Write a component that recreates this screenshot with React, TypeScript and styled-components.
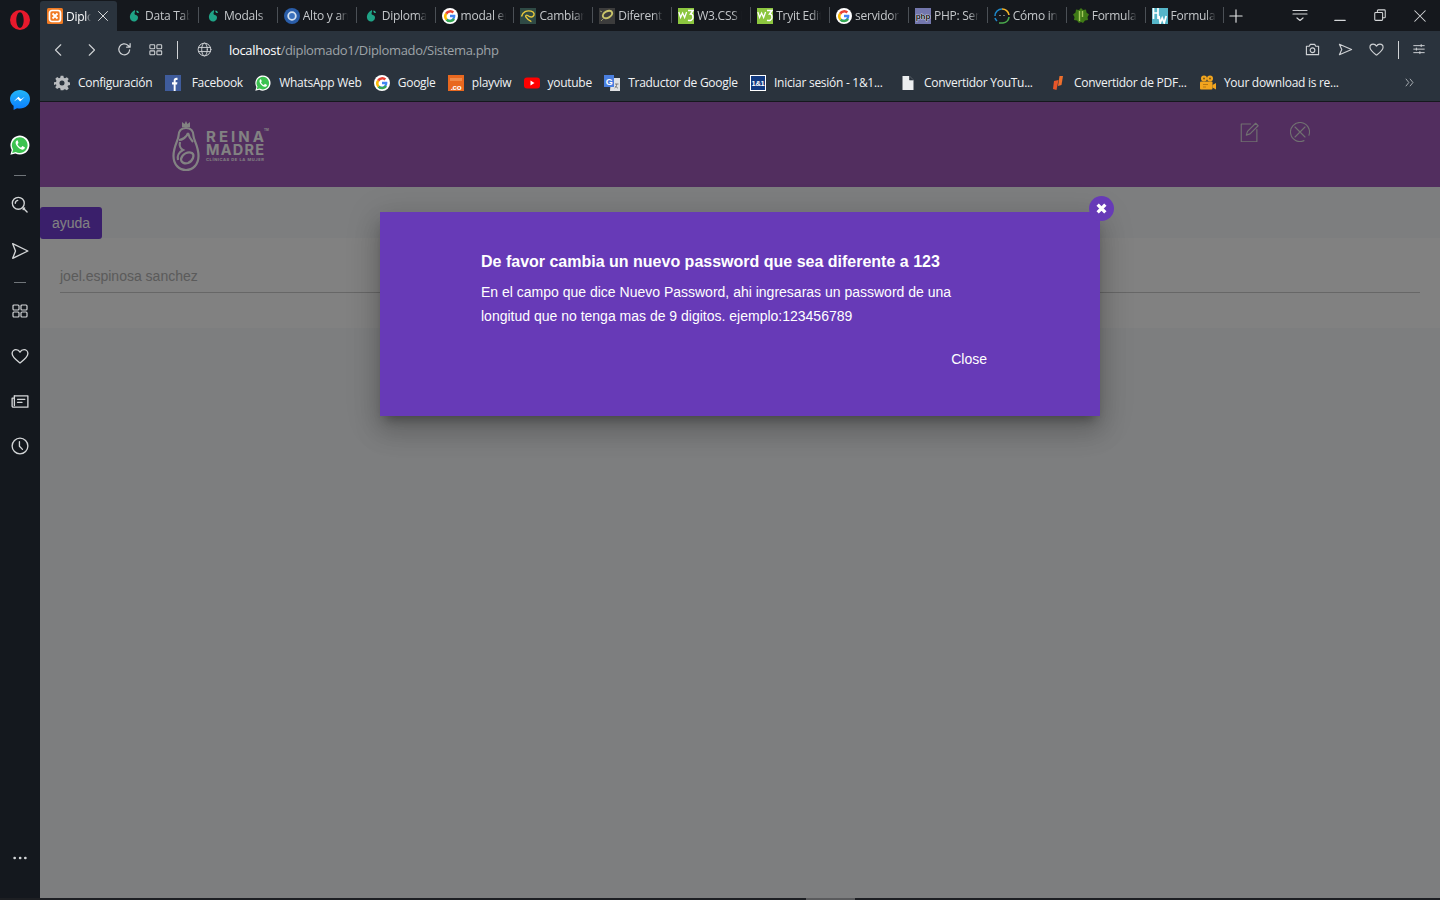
import React from "react";
import styled, { createGlobalStyle } from "styled-components";

const Global = createGlobalStyle`
  html, body { margin: 0; padding: 0; height: 100%; overflow: hidden; background: #14181e; }
  #root { height: 100%; }
  * { box-sizing: border-box; }
`;

const Shell = styled.div`
  width: 1440px; height: 900px; display: flex; flex-direction: column; overflow: hidden;
  font-family: "Open Sans", "Noto Sans", sans-serif;
`;
const Row = styled.div`flex: 1; display: flex; min-height: 0;`;
const BottomStrip = styled.div`height: 2px; background: #1d1f23; flex: none;`;
const BottomThumb = styled.div`height: 2px; width: 49px; margin-left: 806px; background: #5a5b5d;`;

const Sidebar = styled.nav`width: 40px; flex: none; background: #14181e; display: flex; flex-direction: column; align-items: center;`;
const SideSlot = styled.div<{ $h: number; $mt?: number; $mb?: number }>`
  height: ${p => p.$h}px; margin-top: ${p => p.$mt ?? 0}px; margin-bottom: ${p => p.$mb ?? 0}px;
  width: 40px; flex: none; display: flex; align-items: center; justify-content: center; color: #d3d5d7;
`;
const SideRule = styled.div`width: 12px; height: 1px; background: #70757a;`;
const Grow = styled.div`flex: 1;`;

const Main = styled.div`flex: 1; min-width: 0; display: flex; flex-direction: column;`;
const TabStrip = styled.div`height: 31px; flex: none; background: #15181d; display: flex; align-items: flex-end; position: relative;`;
const ActiveTab = styled.div`
  width: 77px; height: 30px; margin-right: 3px; flex: none; background: #2a333d; border-radius: 3px 3px 0 0;
  display: flex; align-items: center; padding-left: 7px; color: #fff; font-size: 12px;
`;
const Tab = styled.div`
  flex: 0 0 78.9px; height: 31px; display: flex; align-items: center; padding-left: 6px; position: relative;
  color: #c4c7ca; font-size: 12px;
  &::after { content: ""; position: absolute; right: 0; top: 7px; height: 16px; width: 1px; background: #4b5056; }
`;
const TabIcon = styled.span`width: 16px; height: 16px; flex: none; display: flex; margin-right: 3px;`;
const TabLabel = styled.span<{ $w: number }>`
  width: ${p => p.$w}px; overflow: hidden; white-space: nowrap; flex: none; letter-spacing: -0.25px;
  -webkit-mask-image: linear-gradient(to right, #000 78%, transparent 100%);
  mask-image: linear-gradient(to right, #000 78%, transparent 100%);
`;
const TabClose = styled.span`display: flex; margin-left: 6px; color: #e8e9ea;`;
const NewTab = styled.div`width: 24px; height: 31px; display: flex; align-items: center; justify-content: center; color: #e4e5e6; flex: none;`;
const WindowButtons = styled.div`margin-left: auto; display: flex; height: 31px; color: #d4d6d8;`;
const WinButton = styled.div`width: 40px; height: 31px; display: flex; align-items: center; justify-content: center;`;

const Toolbar = styled.header`height: 71px; flex: none; background: #2a333d; border-bottom: 1px solid #15181d; display: flex; flex-direction: column;`;
const AddressRow = styled.div`height: 37px; flex: none; display: flex; align-items: center; padding-left: 9px; padding-right: 9px; color: #cfd2d5;`;
const NavButton = styled.div<{ $w: number }>`width: ${p => p.$w}px; height: 37px; flex: none; display: flex; align-items: center; justify-content: center;`;
const ToolRule = styled.div<{ $ml: number; $mr: number }>`width: 1px; height: 18px; background: #d0d3d6; margin: 0 ${p => p.$mr}px 0 ${p => p.$ml}px; flex: none;`;
const Url = styled.div`font-size: 13px; color: #9ea3a8; white-space: nowrap; margin-left: 5px; letter-spacing: -0.33px; flex: 1;`;
const UrlHost = styled.span`color: #fff;`;

const Bookmarks = styled.div`height: 29px; flex: none; display: flex; align-items: center; padding-left: 14px; gap: 12.3px; color: #f0f2f4; font-size: 12px; letter-spacing: -0.28px;`;
const Bookmark = styled.div<{ $w?: number; $gap?: number }>`display: flex; align-items: center; gap: ${p => p.$gap ?? 8}px; white-space: nowrap; flex: none; ${p => p.$w ? `width: ${p.$w}px;` : ""}`;
const BookIcon = styled.span`width: 16px; height: 16px; display: flex; flex: none;`;
const BookMore = styled.div`margin-left: auto; width: 61px; display: flex; justify-content: center; color: #bfc3c7; flex: none;`;

const Page = styled.main`flex: 1; position: relative; background: #f5f7f9; min-height: 0; font-family: "Liberation Sans", Arial, sans-serif;`;
const SiteHeader = styled.div`height: 85px; background: #a15abb; display: flex; justify-content: space-between; align-items: flex-start; padding: 18px 130px 0 132px;`;
const Logo = styled.div`display: flex; color: #fff;`;
const HeaderActions = styled.div`display: flex; gap: 30px; margin-top: 2px; color: #dcdcdc;`;
const HelpButton = styled.button`
  display: block; height: 32px; margin: 20px 0 0; padding: 0 12px; border: 0; border-radius: 3px; background: #723dd2; color: #fff;
  font: 14px/32px "Liberation Sans", Arial, sans-serif; position: relative;
`;
const Card = styled.section`height: 90px; margin-top: -1px; background: #fdfdfd; padding: 26px 20px 0;`;
const Field = styled.div`height: 29px; border-bottom: 1px solid #cbcbcb; font-size: 14px; line-height: 24px; color: #b2b2b2;`;

const Backdrop = styled.div`position: absolute; inset: 0; background: rgba(0,0,0,.49);`;
const Modal = styled.div`
  position: absolute; top: 110px; left: 340px; width: 720px; height: 204px; background: #673ab7; color: #fff; padding: 40px 101px 0;
  box-shadow: 0 16px 24px 2px rgba(0,0,0,.14), 0 6px 30px 5px rgba(0,0,0,.12), 0 8px 10px -5px rgba(0,0,0,.3);
`;
const ModalClose = styled.div`
  position: absolute; right: -14px; top: -16px; width: 25px; height: 25px; border-radius: 50%; background: #673ab7;
  display: flex; align-items: center; justify-content: center;
`;
const ModalTitle = styled.h4`margin: 0 0 8px; font-size: 16px; line-height: 20px; font-weight: 700;`;
const ModalText = styled.p`margin: 0; font-size: 14px; line-height: 24px;`;
const ModalFooter = styled.div`display: flex; justify-content: flex-end; margin-top: 13px;`;
const CloseButton = styled.button`height: 36px; padding: 0 12px; border: 0; background: transparent; color: #fff; font: 14px/36px "Liberation Sans", Arial, sans-serif;`;

type IP = { s?: number; w?: number; children: React.ReactNode };
const Ic = ({ s = 16, w = 1.2, children }: IP) => (
  <svg width={s} height={s} viewBox="0 0 16 16" fill="none" stroke="currentColor" strokeWidth={w} strokeLinecap="round" strokeLinejoin="round">{children}</svg>
);

const Fav = ({ children }: { children: React.ReactNode }) => <svg width="16" height="16" viewBox="0 0 16 16">{children}</svg>;
const G = () => (
  <Fav>
    <circle cx="8" cy="8" r="8" fill="#fff" />
    <path d="M13.200 6.700H8v2.500h3a3.300 3.300 0 0 1-5.400 1.500L3.700 12.400A6 6 0 0 0 13.400 7.800c0-.4-.1-.8-.2-1.100z" fill="#4285f4" />
    <path d="M3.700 12.400a6 6 0 0 1-.5-7.600l2.100 1.600a3.300 3.300 0 0 0 .3 4.300z" fill="#fbbc05" />
    <path d="M3.200 4.800A6 6 0 0 1 12.200 3.600L10.400 5.400a3.300 3.300 0 0 0-5.100 1z" fill="#ea4335" />
    <path d="M3.700 12.400l1.900-1.700a3.300 3.300 0 0 0 5.400-.4l2.100 1.400A6 6 0 0 1 3.700 12.400z" fill="#34a853" />
  </Fav>
);
const Leaf = () => (
  <Fav>
    <path d="M9 2C5.500 3.500 3.500 7 4 10c.5 3 3.500 4.500 6 3 2.500-1.500 2.500-4.500 1-5.500-1.500-1-2.500-.5-2.500-2C8.500 4.500 9.500 4 9 2z" fill="#1fa386" />
    <path d="M10.500 2.500C10 4 11 5.300 12.800 5c0-1.300-1-2.500-2.300-2.500z" fill="#2dbd9b" />
  </Fav>
);
const Xampp = () => (
  <Fav>
    <rect width="16" height="16" rx="1.500" fill="#f07a22" />
    <rect x="2.500" y="2.500" width="11" height="11" rx="2.500" fill="none" stroke="#fff" strokeWidth="1.700" />
    <path d="M5.500 5.500l5 5M10.500 5.500l-5 5" stroke="#fff" strokeWidth="1.800" />
  </Fav>
);
const Alto = () => (
  <Fav>
    <circle cx="8" cy="8" r="8" fill="#2a5da8" />
    <circle cx="8" cy="8" r="3.800" fill="#3b71bd" stroke="#d5e2f0" strokeWidth="1.800" />
  </Fav>
);
const Cambiar = () => (
  <Fav>
    <rect width="16" height="16" fill="#2f4a45" />
    <path d="M1.500 8.500C2.500 4 7 2 11 3.200c3.400 1 4 3.600 2 5.200-2 1.600-4 .2-5.400-.9-1.300-1-2.600.3-1.600 1.700 1 1.600 3.400 3.800 5.400 4.400" fill="none" stroke="#e9c93c" strokeWidth="1.400" />
  </Fav>
);
const Diferente = () => (
  <Fav>
    <rect width="16" height="16" fill="#3c3c3c" />
    <ellipse cx="8.500" cy="6.500" rx="5" ry="3.200" transform="rotate(-28 8.500 6.500)" fill="none" stroke="#c9c46a" strokeWidth="2" />
    <path d="M1 3l2 .8M2 13l3-3" stroke="#8f8f6a" strokeWidth="1" />
  </Fav>
);
const W3 = () => (
  <Fav>
    <rect width="16" height="16" fill="#8cc63f" />
    <path d="M.8 4l1.800 5.500 2-4.500 2 4.500L8.600 4" fill="none" stroke="#fff" strokeWidth="1.300" />
    <path d="M10 2.500h5l-2.500 3.500c1.500 0 2.500 1.200 2.500 3.200 0 2.600-2.500 4-5 3" fill="none" stroke="#fff" strokeWidth="1.500" />
  </Fav>
);
const Php = () => (
  <Fav>
    <rect width="16" height="16" fill="#7377ad" />
    <text x="8" y="11" textAnchor="middle" fontFamily="Liberation Sans, sans-serif" fontSize="8" fontWeight="700" fill="#111" stroke="#fff" strokeWidth=".7" paintOrder="stroke">php</text>
  </Fav>
);
const Como = () => (
  <Fav>
    <path d="M1 8a7 7 0 0 1 7-7" fill="none" stroke="#1e88c9" strokeWidth="1.600" />
    <path d="M8 1a7 7 0 0 1 7 6" fill="none" stroke="#f4b32b" strokeWidth="1.600" />
    <path d="M15 9a7 7 0 0 1-6 6H5" fill="none" stroke="#49a84c" strokeWidth="1.600" />
    <path d="M3 13a7 7 0 0 1-2-3" fill="none" stroke="#1e88c9" strokeWidth="1.600" />
    <path d="M5.500 7.500h1M9.500 7.500h1" stroke="#ddd" strokeWidth="1" />
  </Fav>
);
const Formula = () => (
  <Fav>
    <path d="M8 0l2 2 3-.5.5 3L16 6.500 14.500 9l.5 3-3 .5L10 15l-2-1-2 1-2-2.500-3-.5.5-3L0 6.500 2.500 4.500 3 1.500l3 .5z" fill="#3f7a16" />
    <path d="M6.500 3v10M9.500 3v6" stroke="#a5c85c" strokeWidth="1.400" />
  </Fav>
);
const Hw = () => (
  <Fav>
    <rect width="16" height="16" fill="#55b6c9" />
    <path d="M1.500 0v11M6 0v11M1.500 5h4.500M7 8l1.200 7 2-5 2 5 2-7" fill="none" stroke="#fff" strokeWidth="1.700" />
  </Fav>
);
const Facebook = () => (
  <Fav>
    <rect width="16" height="16" fill="#3f5c9c" />
    <path d="M8.700 16V9.500H7V7.200h1.700V5.500c0-1.800 1.100-2.700 2.600-2.700h1.200V5h-1c-.7 0-.9.4-.9.9v1.300h1.800l-.3 2.300h-1.500V16z" fill="#fff" />
  </Fav>
);
const Whatsapp = ({ s = 16 }: { s?: number }) => (
  <svg width={s} height={s} viewBox="0 0 16 16">
    <path d="M.3 15.800l1.100-3.900A7.600 7.600 0 1 1 4.300 14.700z" fill="#fff" />
    <path d="M1.700 14.300l.8-2.700a6.300 6.300 0 1 1 2.100 2z" fill="#3cc250" />
    <path d="M5.700 4.200c-.6.3-1.300 1.100-1.200 2.200.2 2 2.800 5 5.200 5.300 1.200.1 2-.6 2.200-1.300.1-.4 0-.6-.2-.7L10.300 8.900c-.3-.1-.5 0-.7.3l-.5.6c-.2.2-.4.2-.6.1-1-.4-1.900-1.300-2.400-2.300-.1-.2-.1-.4.1-.6l.4-.5c.2-.2.2-.4.1-.6L6.100 4.400c-.1-.2-.2-.3-.4-.2z" fill="#fff" />
  </svg>
);
const Messenger = () => (
  <svg width="20" height="20" viewBox="0 0 20 20">
    <defs><linearGradient id="ms" x1="0" y1="1" x2="0" y2="0"><stop offset="0" stopColor="#0a7cff" /><stop offset="1" stopColor="#22b5f7" /></linearGradient></defs>
    <path d="M10 0C4.500 0 0 4 0 9c0 2.800 1.400 5.200 3.600 6.800V20l3.400-1.800c1 .2 2 .3 3 .3 5.500 0 10-4.100 10-9.500S15.500 0 10 0z" fill="url(#ms)" />
    <path d="M3.800 11.500l4.600-4.800 2.600 2.500 3.800-2.500-4.600 4.900-2.500-2.600z" fill="#fff" />
  </svg>
);
const Opera = () => (
  <svg width="20" height="20" viewBox="0 0 20 20">
    <path fillRule="evenodd" d="M10 0a10 10 0 1 0 0 20 10 10 0 0 0 0-20zm0 2.200c2.100 0 3.700 3.500 3.700 7.800s-1.600 7.800-3.700 7.800S6.300 14.300 6.300 10 7.900 2.200 10 2.200z" fill="#e8192c" />
  </svg>
);
const Translate = () => (
  <Fav>
    <path d="M7 3h9v13H6z" fill="#dfe1e4" />
    <path d="M0 0h10v12H0z" fill="#4a7fe0" />
    <text x="5" y="9.500" textAnchor="middle" fontFamily="Liberation Sans, sans-serif" fontSize="9" fontWeight="700" fill="#fff">G</text>
    <path d="M11 9h3.500M12.700 9c0 2-1 3.500-2 4M11.500 11c.5 1 1.500 2 2.500 2" stroke="#666" strokeWidth=".8" fill="none" />
  </Fav>
);
const OneAndOne = () => (
  <Fav>
    <rect width="16" height="16" fill="#fff" />
    <rect x="1" y="1" width="14" height="14" fill="#123a80" />
    <text x="8" y="11" textAnchor="middle" fontFamily="Liberation Sans, sans-serif" fontSize="7.500" fontWeight="700" fill="#fff">1&amp;1</text>
  </Fav>
);
const Doc = () => (
  <Fav><path d="M2.500 1h7l4 4v10h-11z" fill="#eceef0" /><path d="M9.500 1v4h4" fill="#2a333d" stroke="#2a333d" strokeWidth=".6" /></Fav>
);
const Pdf = () => (
  <Fav>
    <path d="M4 6l4.500-1L6.500 15 3 14z" fill="#e8562a" />
    <path d="M9.500 1L13 1l-1.500 9-3.500 1z" fill="#ef6f2c" />
  </Fav>
);
const Film = () => (
  <Fav>
    <circle cx="4" cy="3.500" r="3" fill="#f2a51e" /><circle cx="10" cy="3.500" r="3" fill="#f2a51e" />
    <circle cx="4" cy="3.500" r="1" fill="#7a5a1a" /><circle cx="10" cy="3.500" r="1" fill="#7a5a1a" />
    <rect x="0" y="6.500" width="12.500" height="8" rx="1" fill="#f2a51e" /><path d="M12.500 10l3.500-2v6.500l-3.500-2z" fill="#f2a51e" />
    <path d="M3 9.500h5M3 12h3" stroke="#b97a12" strokeWidth="1" />
  </Fav>
);
const Co = () => (
  <Fav>
    <rect width="16" height="16" fill="#e8681f" />
    <rect x="2" y="3" width="12" height="3" fill="#f08a48" />
    <text x="8" y="14.500" textAnchor="middle" fontFamily="Liberation Sans, sans-serif" fontSize="8" fontWeight="700" fill="#fff">.co</text>
  </Fav>
);
const Youtube = () => (
  <Fav>
    <rect y="2.500" width="16" height="11" rx="3" fill="#f00" />
    <path d="M6.500 5.500l4 2.500-4 2.500z" fill="#fff" />
  </Fav>
);
const Gear = () => (
  <svg width="16" height="16" viewBox="0 0 24 24">
    <path fillRule="evenodd" fill="#b9bcbf" d="M10 1h4l.7 3.200 1.800.8 2.800-1.800 2.800 2.800L20.300 8.800l.8 1.800 2.900.6v3.800l-3 .6-.7 1.800 1.800 2.800-2.800 2.800-2.800-1.800-1.800.7L14 23h-4l-.7-3-1.800-.7-2.800 1.800-2.800-2.800 1.800-2.800-.8-1.800L0 15v-4l3-.6.7-1.800L2 5.800 4.800 3l2.700 1.800 1.800-.8zM12 8.200a3.800 3.800 0 1 0 0 7.600 3.800 3.800 0 0 0 0-7.600z" />
  </svg>
);

const tabs: [React.ReactNode, string][] = [
  [<Leaf />, "Data Tables"], [<Leaf />, "Modals | M"], [<Alto />, "Alto y ancho"], [<Leaf />, "Diplomado"],
  [<G />, "modal en"], [<Cambiar />, "Cambiar el"], [<Diferente />, "Diferentes"], [<W3 />, "W3.CSS M"],
  [<W3 />, "Tryit Editor"], [<G />, "servidor"], [<Php />, "PHP: Serv"], [<Como />, "Cómo in"],
  [<Formula />, "Formula"], [<Hw />, "Formula"],
];

export default function App() {
  return (
    <Shell>
      <Global />
      <Row>
        <Sidebar>
          <SideSlot $h={40}><Opera /></SideSlot>
          <SideSlot $h={40} $mt={40}><Messenger /></SideSlot>
          <SideSlot $h={50}><Whatsapp s={20} /></SideSlot>
          <SideSlot $h={11}><SideRule /></SideSlot>
          <SideSlot $h={48}>
            <Ic s={18}><circle cx="6.500" cy="6.500" r="5.300" /><path d="M3.800 6.500A2.700 2.700 0 0 1 6 3.900M10.500 10.500l3.800 3.800" /><path d="M10.800 12l1.300-1.300" /></Ic>
          </SideSlot>
          <SideSlot $h={44}>
            <Ic s={18}><path d="M1.500 1.500L15 8 1.500 14.500 4 8z" /></Ic>
          </SideSlot>
          <SideSlot $h={18}><SideRule /></SideSlot>
          <SideSlot $h={40}>
            <Ic><rect x="1" y="2" width="6" height="5" rx="1" /><rect x="9" y="2" width="6" height="5" rx="1" /><rect x="1" y="9" width="6" height="5" rx="1" /><rect x="9" y="9" width="6" height="5" rx="1" /></Ic>
          </SideSlot>
          <SideSlot $h={50}>
            <Ic s={18}><path d="M8 14.200C4.500 11.500 1 9 1 5.800 1 3.600 2.700 2.300 4.400 2.300 5.900 2.300 7.200 3.100 8 4.500c.8-1.400 2.100-2.200 3.600-2.200 1.700 0 3.400 1.300 3.400 3.500 0 3.200-3.500 5.700-7 8.400z" /></Ic>
          </SideSlot>
          <SideSlot $h={40}>
            <Ic s={18}><path d="M3 3.500h12v10H2a1 1 0 0 1-1-1V5.500h2" /><path d="M3 3.500v8.500M5.800 6.500h6.500M5.800 9.200h4" /></Ic>
          </SideSlot>
          <SideSlot $h={50}>
            <Ic s={18}><circle cx="8" cy="8" r="7" /><path d="M7.500 4.200V8.300l2.700 2.700" /></Ic>
          </SideSlot>
          <Grow />
          <SideSlot $h={40} $mb={20}>
            <Ic><path d="M2.500 8h.3M8 8h.3M13.200 8h.3" strokeWidth="2.400" /></Ic>
          </SideSlot>
        </Sidebar>
        <Main>
          <TabStrip>
            <ActiveTab>
              <TabIcon><Xampp /></TabIcon>
              <TabLabel $w={25}>Diplomado</TabLabel>
              <TabClose><Ic s={12}><path d="M2 2l12 12M14 2L2 14" /></Ic></TabClose>
            </ActiveTab>
            {tabs.map(([icon, label], i) => (
              <Tab key={i}>
                <TabIcon>{icon}</TabIcon>
                <TabLabel $w={45}>{label}</TabLabel>
              </Tab>
            ))}
            <NewTab><Ic s={14} w={1.300}><path d="M8 1v14M1 8h14" /></Ic></NewTab>
            <WindowButtons>
              <WinButton><Ic s={16}><path d="M1 2.500h14M1 6h14M5 10l3 2.500 3-2.500" /></Ic></WinButton>
              <WinButton><Ic s={14}><path d="M2 13h12" /></Ic></WinButton>
              <WinButton><Ic s={14}><rect x="2" y="4" width="9" height="9" rx="1" /><path d="M5 4V2a1 1 0 0 1 1-1h7a1 1 0 0 1 1 1v7a1 1 0 0 1-1 1h-2" /></Ic></WinButton>
              <WinButton><Ic s={14}><path d="M2 2l12 12M14 2L2 14" /></Ic></WinButton>
            </WindowButtons>
          </TabStrip>
          <Toolbar>
            <AddressRow>
              <NavButton $w={20}><Ic s={14} w={1.300}><path d="M10 2L4 8l6 6" /></Ic></NavButton>
              <NavButton $w={44}><Ic s={14} w={1.300}><path d="M6 2l6 6-6 6" /></Ic></NavButton>
              <NavButton $w={22}><Ic s={15} w={1.300}><path d="M13.500 8.500A5.800 5.800 0 1 1 11.600 3.500L14 5.500M14 1.800v3.700h-3.700" /></Ic></NavButton>
              <NavButton $w={41}><Ic s={14}><rect x="1" y="2" width="5.500" height="4.500" rx=".8" /><rect x="9" y="2" width="5.500" height="4.500" rx=".8" /><rect x="1" y="9" width="5.500" height="4.500" rx=".8" /><rect x="9" y="9" width="5.500" height="4.500" rx=".8" /></Ic></NavButton>
              <ToolRule $ml={1} $mr={6} />
              <NavButton $w={40}><Ic s={15} w={1}><circle cx="8" cy="8" r="6.800" /><ellipse cx="8" cy="8" rx="3" ry="6.800" /><path d="M1.600 5.800h12.800M1.600 10.200h12.800" /></Ic></NavButton>
              <Url><UrlHost>localhost</UrlHost>/diplomado1/Diplomado/Sistema.php</Url>
              <NavButton $w={32}><Ic s={15}><path d="M1.500 4.500h3l1.200-2h4.600l1.200 2h3v9h-13z" /><circle cx="8" cy="8.800" r="2.500" /></Ic></NavButton>
              <NavButton $w={34}><Ic s={15}><path d="M1.500 2.500L14.500 8 1.500 13.500 4 8z" /></Ic></NavButton>
              <NavButton $w={28}><Ic s={15}><path d="M8 14C4.500 11.300 1 8.800 1 5.600 1 3.400 2.700 2.200 4.400 2.200 5.900 2.200 7.200 3 8 4.400c.8-1.400 2.100-2.200 3.600-2.200 1.700 0 3.400 1.200 3.400 3.400 0 3.200-3.500 5.700-7 8.400z" /></Ic></NavButton>
              <ToolRule $ml={8} $mr={8} />
              <NavButton $w={24}><Ic s={14} w={1.100}><path d="M2 3h12M2 7h12M2 11h12M10.500 1.800v2.400M5 5.800v2.400M9 9.800v2.400" /></Ic></NavButton>
            </AddressRow>
            <Bookmarks>
              <Bookmark><BookIcon><Gear /></BookIcon>Configuración</Bookmark>
              <Bookmark $gap={11}><BookIcon><Facebook /></BookIcon>Facebook</Bookmark>
              <Bookmark><BookIcon><Whatsapp /></BookIcon>WhatsApp Web</Bookmark>
              <Bookmark><BookIcon><G /></BookIcon>Google</Bookmark>
              <Bookmark><BookIcon><Co /></BookIcon>playviw</Bookmark>
              <Bookmark><BookIcon><Youtube /></BookIcon>youtube</Bookmark>
              <Bookmark><BookIcon><Translate /></BookIcon>Traductor de Google</Bookmark>
              <Bookmark $w={137.7}><BookIcon><OneAndOne /></BookIcon>Iniciar sesión - 1&amp;1...</Bookmark>
              <Bookmark $w={137.7}><BookIcon><Doc /></BookIcon>Convertidor YouTu...</Bookmark>
              <Bookmark $w={137.7}><BookIcon><Pdf /></BookIcon>Convertidor de PDF...</Bookmark>
              <Bookmark><BookIcon><Film /></BookIcon>Your download is re...</Bookmark>
              <BookMore><Ic s={11}><path d="M3 3l4 5-4 5M9 3l4 5-4 5" /></Ic></BookMore>
            </Bookmarks>
          </Toolbar>
          <Page>
            <SiteHeader>
              <Logo>
                <svg width="100" height="52" viewBox="0 0 100 52" fill="none" stroke="currentColor" strokeWidth="2.200">
                  <path d="M10 7V2l2.500 2L14 1l1.500 3L18 2v5z" fill="currentColor" stroke="none" />
                  <path d="M14 8c-5 0-7.500 3-7.500 8 0 4-5 10-5 20 0 9 6 14 12.500 14S26.500 45 26.500 36c0-10-5-16-5-20 0-5-2.500-8-7.500-8z" />
                  <path d="M7 20c3 0 8-3 9-7 1 4 3 7 5 9M8 22c-1 4 1 7 3 8-4 2-6 6-5 10" />
                  <path d="M9 39c1-5 7-8 11-6 3 2 1 8-4 10-3 1-7 0-7-4z" />
                  <g fill="currentColor" stroke="none" fontFamily="Inter, Open Sans, sans-serif" fontWeight="700">
                    <text x="34" y="22" fontSize="15" textLength="58" lengthAdjust="spacing">REINA</text>
                    <text x="34" y="34.500" fontSize="14.500" textLength="58" lengthAdjust="spacing">MADRE</text>
                    <text x="34" y="41" fontSize="4" textLength="58" lengthAdjust="spacing">CLÍNICAS DE LA MUJER</text>
                    <text x="92" y="11" fontSize="3">TM</text>
                  </g>
                </svg>
              </Logo>
              <HeaderActions>
                <Ic s={20} w={.9}><path d="M8.500 1.600H1V15.800H13.500V6" /><path d="M5 10.500l1-3L12.500 1l2 2L8 9.500z" /></Ic>
                <Ic s={20} w={.9}><path d="M11.200 14.900A7.600 7.600 0 1 1 15.140 10.600" /><path d="M4 4l8 8M12 4l-8 8" /></Ic>
              </HeaderActions>
            </SiteHeader>
            <HelpButton>ayuda</HelpButton>
            <Card><Field>joel.espinosa sanchez</Field></Card>
            <Backdrop />
            <Modal>
              <ModalClose>
                <svg width="11" height="11" viewBox="0 0 10 10"><path d="M1.500 1.500l7 7M8.500 1.500l-7 7" stroke="#fff" strokeWidth="3" /></svg>
              </ModalClose>
              <ModalTitle>De favor cambia un nuevo password que sea diferente a 123</ModalTitle>
              <ModalText>En el campo que dice Nuevo Password, ahi ingresaras un password de una longitud que no tenga mas de 9 digitos. ejemplo:123456789</ModalText>
              <ModalFooter><CloseButton>Close</CloseButton></ModalFooter>
            </Modal>
          </Page>
        </Main>
      </Row>
      <BottomStrip><BottomThumb /></BottomStrip>
    </Shell>
  );
}
